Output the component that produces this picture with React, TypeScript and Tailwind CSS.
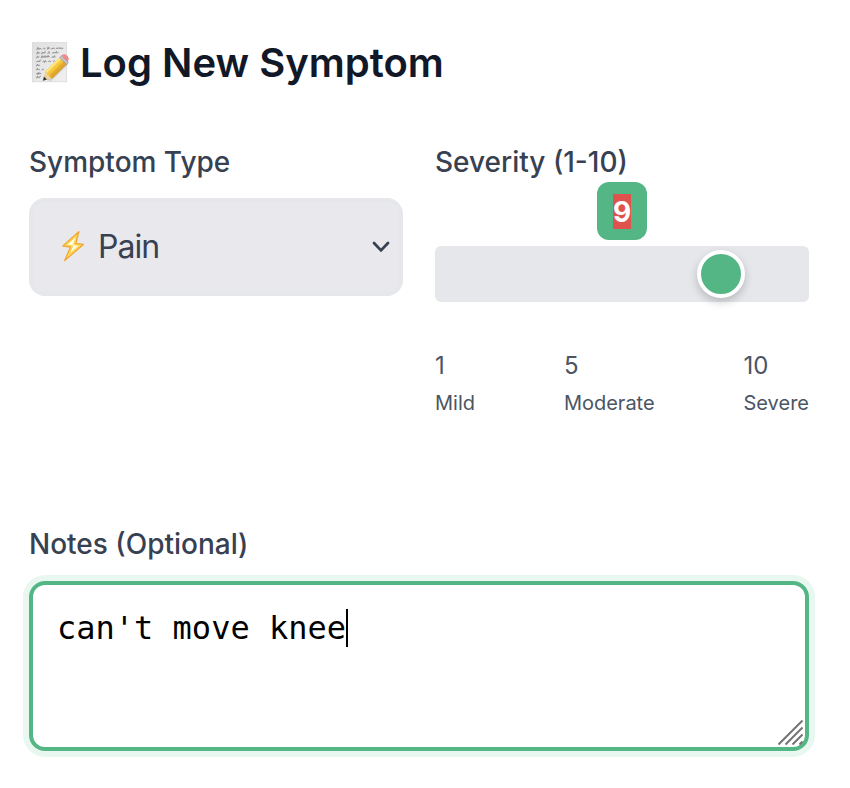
import React from "react";

function MemoIcon() {
  return (
    <svg width="40" height="44" viewBox="0 0 40 44" className="shrink-0">
      <defs>
        <linearGradient id="paper" x1="0" y1="0" x2="1" y2="1">
          <stop offset="0" stopColor="#e0e0e0" />
          <stop offset="1" stopColor="#f0f0f0" />
        </linearGradient>
        <linearGradient id="pencil" x1="0.3" y1="0.3" x2="0.7" y2="0.7">
          <stop offset="0" stopColor="#ffdf58" />
          <stop offset="0.5" stopColor="#f3c23a" />
          <stop offset="1" stopColor="#d19320" />
        </linearGradient>
      </defs>
      <rect x="3.3" y="1.6" width="34.4" height="39.2" fill="url(#paper)" stroke="#d6d6d6" strokeWidth="0.7" />
      <g fill="none" stroke="#858585" strokeWidth="0.8" strokeLinecap="round" strokeLinejoin="round">
        <path d="M7.8 8.6l1.1-2.3.2 2 1-1.2.5 1.2 1-1.2.6.9M14.5 8l1-1.2.4 1.2M18.3 8.2l.9-2.3.3 2.2 1-1.2M22.3 8l.9-1 .6.9 1-1.2.5 1.1M27.2 7.8l.9-1.1.6 1 .9-1 .6 1 .8-1.1.5 1 1-1 .3 1.2 1.2-.5" />
        <path d="M7.8 12.9l.8-2.2.5 2 1-1.2.5.8M12.5 12.6l.9-1.4.5 1.3 1-1.2.6 1.1.8-2M18.8 12.5l1.1-2 .5 1.9M23.5 12.4l.8-1.2.6 1.1 1-1.1.6 1 1-1.9.4 1.8 1.2-.4" />
        <path d="M7.6 17l.9-2.1.5 1.9 1-1.1M12.1 16.8l1-2.2.5 2 1-1.2.5 1.1 1-2 .5 1.9.9-1 .6 1 1-2 .4 1.8 1-1M23 16.6l1-1.3.4 1.2 1.2-1.9.4 1.7" />
        <path d="M7.5 21l1-1.1.5 1 1-1.2.5 1.2 1-1.9M14 20.9l.9-1.2.6 1.9 1-2 .7 1.2M19.4 20.8l1-1.1.5 1 1.2-.5M24.3 20.5l1-1 .5.8M7.6 25.1l.8-2.1.5 1.9 1-1.1.6 1M7.5 29l.9-1.9.5 1.8 1-1 .5 1M13 29l.9-1.2.5 1.1M7.4 33l1-1.2.6 2 .8-2.5.7 1.8.9-1.2.5.9M7.6 37.2l.8-2.3.6 2 1-1.1.5 1 1-1.8" />
      </g>
      <path d="M16.5 38.5L37 21.5l2 2-17 16.5z" fill="#888" opacity="0.3" />
      <path d="M13.9 39.7l2.5-9.9 7.2 7.1z" fill="#ecd2a1" />
      <path d="M16.2 30.2L30.8 16.2l7 7.1-14.2 14-2.3-.4-.7-2.2-2.2-.5-.4-2.3z" fill="url(#pencil)" />
      <path d="M17.7 30.7L31.8 17.3" stroke="#ffe984" strokeWidth="1.5" />
      <path d="M21.5 34.8l14.4-14" stroke="#d89b24" strokeWidth="0.8" />
      <path d="M13.9 39.7l1-4.1 3.1 3z" fill="#373737" />
      <path d="M30.6 16.5l2-2 7 7-2 2z" fill="#bfc3c7" stroke="#83878a" strokeWidth="0.5" />
      <path d="M32.5 14.6l.9-.8c1.4-1.2 3.5-.5 4.9.9s2.1 3.6.8 5.1l-.8.9z" fill="#ee8990" />
    </svg>
  );
}

function Bolt() {
  return (
    <svg width="26" height="34" viewBox="0 0 26 34" className="shrink-0">
      <path d="M18.8 1.7L2.9 16.1l7.7.9L4.7 30.5 23.3 14.4l-7.5-.9z" fill="#ffe45c" stroke="#f2a737" strokeWidth="1.4" strokeLinejoin="round" />
      <path d="M16.5 5.9L6.4 15l6.5.9-3.7 8L19.7 15.4l-6.2-.7z" fill="#fffde8" stroke="#ffd24a" strokeWidth="1" />
    </svg>
  );
}

const marks = [
  { value: "1", label: "Mild" },
  { value: "5", label: "Moderate" },
  { value: "10", label: "Severe" },
];

export default function App() {
  return (
    <main className="h-[788px] w-[850px] overflow-hidden bg-white pt-[33px] pr-[41px] pl-[29px] font-['Inter',sans-serif] text-gray-700">
      <h1 className="flex h-[60px] items-center gap-[11px] text-[40px] leading-[60px] font-semibold text-[#111827]">
        <MemoIcon />
        <span>Log New Symptom</span>
      </h1>

      <div className="mt-12 grid grid-cols-2 gap-8">
        <section>
          <div className="h-[57px] text-[28px] leading-[42px] font-medium text-[#374151]">Symptom Type</div>
          <button className="flex h-[98px] w-full items-center rounded-2xl border-4 border-[#e5e7eb] bg-[#e8e8ed] pr-[9px] pl-[27px] text-left text-[32px] text-[#374151]">
            <Bolt />
            <span className="ml-[12px] tracking-[-0.03em]">Pain</span>
            <svg width="18" height="12" viewBox="0 0 18 12" className="mb-px ml-auto" fill="none" stroke="#374151" strokeWidth="2.8" strokeLinecap="round" strokeLinejoin="round">
              <path d="M2 2l7 7.4L16 2" />
            </svg>
          </button>
        </section>

        <section>
          <div className="h-[41px] text-[28px] leading-[42px] font-medium text-[#374151]">Severity (1-10)</div>
          <div className="mx-auto flex h-[58px] w-[50px] items-center justify-center rounded-xl bg-[#55b685] text-[28px] font-bold text-white">
            <span className="flex h-[35px] w-[18px] items-center justify-center bg-[#df524e] pt-px">9</span>
          </div>
          <div className="mt-[6px] flex h-14 items-center rounded-md bg-[#e5e7eb] pl-[262px]">
            <div className="size-12 rounded-full border-4 border-white bg-[#55b685] shadow-[0_4px_8px_rgba(0,0,0,0.2)]" />
          </div>
          <div className="mt-[45px] flex justify-between text-[#4b5563]">
            {marks.map((mark) => (
              <div key={mark.value}>
                <div className="text-[24px] leading-[38px]">{mark.value}</div>
                <div className="text-[20px] leading-[36px]">{mark.label}</div>
              </div>
            ))}
          </div>
        </section>
      </div>

      <label className="mt-[102px] block h-[58px] text-[28px] leading-[42px] font-medium text-[#374151]">Notes (Optional)</label>
      <div className="flex h-[170px] justify-between rounded-2xl border-4 border-[#55b685] bg-white pl-6 shadow-[0_0_0_6px_#e8f7f0]">
        <div className="mt-6 flex h-[38px] items-center font-['DejaVu_Sans_Mono',monospace] text-[32px] text-black">
          <span>can't move knee</span>
          <span className="h-[38px] w-[2px] bg-black" />
        </div>
        <svg width="26" height="26" viewBox="0 0 26 26" className="mr-[1px] mb-[1px] self-end" fill="none" stroke="#747474" strokeWidth="2">
          <path d="M.5 24.5L24.5 .5M7.5 24.5L24.5 7.5M14.5 24.5L24.5 14.5M21.5 24.5l3-3" />
        </svg>
      </div>
    </main>
  );
}
